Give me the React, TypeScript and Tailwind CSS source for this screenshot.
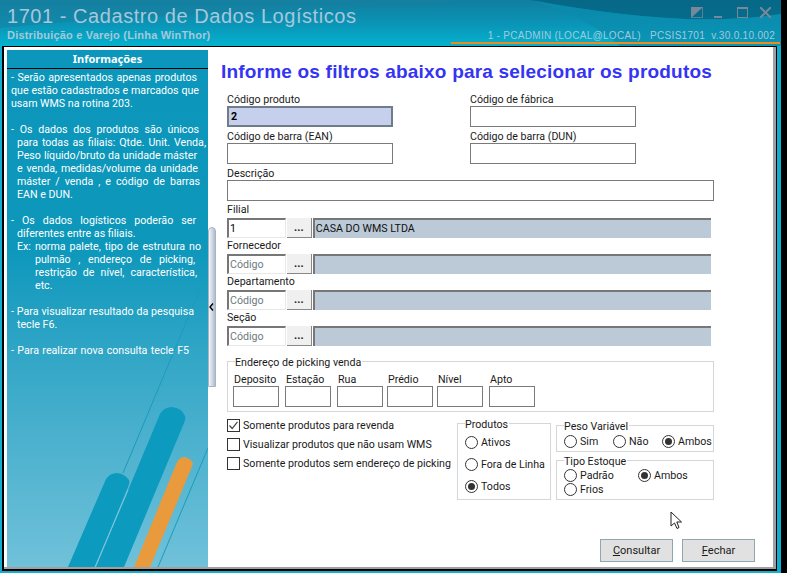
import type { ReactNode } from "react";

const FONT = "font-['Roboto',sans-serif] text-[10.65px] leading-[13px] text-[#1a1a1a]";

// text, left edge and right edge inside the side panel (null = not stretched)
const INFO_LINES: [string, number, number | null][] = [
  ["- Serão apresentados apenas produtos", 4, 190],
  ["que estão cadastrados e marcados que", 4, 192],
  ["usam WMS na rotina 203.", 4, null],
  ["", 4, null],
  ["- Os dados dos produtos são únicos", 4, 192],
  ["para todas as filiais: Qtde. Unit. Venda,", 10, 199],
  ["Peso líquido/bruto da unidade máster", 10, 190],
  ["e venda, medidas/volume da unidade", 10, 191],
  ["máster / venda , e código de barras", 10, 193],
  ["EAN e DUN.", 10, null],
  ["", 4, null],
  ["- Os dados logísticos poderão ser", 4, 189],
  ["diferentes entre as filiais.", 10, null],
  ["Ex: norma palete, tipo de estrutura no", 10, 194],
  ["pulmão , endereço de picking,", 28, 188],
  ["restrição de nível, característica,", 28, 190],
  ["etc.", 28, null],
  ["", 4, null],
  ["- Para visualizar resultado da pesquisa", 4, 187],
  ["tecle F6.", 10, null],
  ["", 4, null],
  ["- Para realizar nova consulta tecle F5", 4, 182],
];

function Field({ label, className }: { label: string; className: string }) {
  return (
    <div className={className}>
      <div className="h-[13px] pt-[1px] whitespace-nowrap">{label}</div>
      <div className="mt-[1px] h-[21px] border border-[#7a7a7a] bg-white" />
    </div>
  );
}

function LookupRow({ label, code, name }: { label: string; code?: string; name?: string }) {
  return (
    <div className="h-[36px]">
      <div className="h-[15px] pt-[1px] whitespace-nowrap">{label}</div>
      <div className="mt-[1px] flex h-[20px] w-[484px]">
        <div
          className={
            "flex w-[59px] items-center border-t-2 border-r border-b border-l-2 border-t-[#777] border-r-[#e8e8e8] border-b-[#e8e8e8] border-l-[#777] pl-[1px] " +
            (code ? "text-black" : "text-[#6d7a80]")
          }
        >
          {code ?? "Código"}
        </div>
        <button className="ml-[1px] flex h-[20px] w-[25px] items-center justify-center border-r border-b border-r-[#888] border-b-[#888] bg-[#f0f0f0] text-[11px] font-bold">
          ...
        </button>
        <div className="ml-[1px] flex h-[20px] w-[399px] items-center border-t-2 border-l-2 border-t-[#777] border-l-[#777] bg-[#bccad8] pb-[1px] pl-[1px] text-[#111]">
          {name}
        </div>
      </div>
    </div>
  );
}

function Group({ title, className, children }: { title: string; className: string; children: ReactNode }) {
  return (
    <div className={"relative border border-[#d6d6d6] " + className}>
      <span className="absolute top-[-6px] left-[7px] bg-white pr-[1px] whitespace-nowrap">{title}</span>
      {children}
    </div>
  );
}

function Radio({ label, checked, className }: { label: string; checked?: boolean; className?: string }) {
  return (
    <div className={"flex items-center gap-[3px] whitespace-nowrap " + (className ?? "")}>
      <span className="flex size-[13px] shrink-0 items-center justify-center rounded-full border border-[#333] bg-white">
        {checked && <span className="size-[7px] rounded-full bg-[#333]" />}
      </span>
      {label}
    </div>
  );
}

function Check({ label, checked }: { label: string; checked?: boolean }) {
  return (
    <div className="flex h-[13px] items-center gap-[3px] whitespace-nowrap">
      <span className="flex size-[13px] shrink-0 items-center justify-center border border-[#333] bg-white">
        {checked && (
          <svg width="11" height="11" viewBox="0 0 11 11" fill="none" stroke="#444" strokeWidth="1.2">
            <path d="M1.5 5.5 L4.2 8.5 L9.5 1.8" />
          </svg>
        )}
      </span>
      {label}
    </div>
  );
}

function PickingField({ label, className }: { label: string; className: string }) {
  return (
    <div className={className}>
      <div className="h-[14px] pt-[1px] pl-[1px] whitespace-nowrap">{label}</div>
      <div className="h-[21px] w-[46px] border border-[#7a7a7a] bg-white" />
    </div>
  );
}

function ActionButton({ first, rest }: { first: string; rest: string }) {
  return (
    <button className="h-[23px] w-[73px] border border-[#8fa6b3] bg-[#e1e1e1] text-center text-[11px]">
      <span className="underline">{first}</span>
      {rest}
    </button>
  );
}

function SideArt() {
  return (
    <svg className="absolute inset-0" width="201" height="517" viewBox="0 0 201 517" fill="none">
      <path d="M201 220 L116 423" stroke="#1a9bbd" strokeWidth="1" />
      <path d="M61 517 L99 429 Q103 423 110 423 Q118 424 122 430 Q123 433 121 437 L88 517 Z" fill="#0c9abf" />
      <path d="M89 517 L153 364 Q157 357 165 357 Q175 358 178 366 Q179 369 177 373 L117 517 Z" fill="#0c9abf" />
      <path d="M127 517 L170 412 Q173 407 178 407 Q185 409 186 414 L143 517 Z" fill="#e99a3c" />
      <path d="M151 517 L201 398" stroke="#1a9bbd" strokeWidth="1" />
      <path d="M88 517 L121 440" stroke="#7cc4d8" strokeWidth="1" />
    </svg>
  );
}

function TitleBar() {
  return (
    <div className="relative h-[46px] overflow-hidden bg-[linear-gradient(180deg,#107e9f,#0a96b8_55%,#04b2ce)]">
      <svg className="absolute inset-0" width="781" height="46" viewBox="0 0 781 46" fill="none">
        <path d="M0 0 H781 V14 C700 26 620 16 530 0 Z" fill="#04607f" opacity="0.75" />
        <path d="M0 0 H470 C360 12 180 10 0 28 Z" fill="#1a7fa0" opacity="0.55" />
        <path d="M530 0 C620 16 700 26 781 14 V46 H620 C600 28 570 12 530 0 Z" fill="#0a8cae" opacity="0.7" />
      </svg>
      <div className="relative flex h-full justify-between">
        <div className="pt-[4px] pl-[7px]">
          <div className="font-['Liberation_Sans',sans-serif] text-[20px] leading-[24px] tracking-[0.55px] whitespace-nowrap text-[#a6c8da]">
            1701 - Cadastro de Dados Logísticos
          </div>
          <div className="mt-[1px] font-['Liberation_Sans',sans-serif] text-[11px] leading-[13px] font-bold tracking-[0.2px] whitespace-nowrap text-[#a6c8da]">
            Distribuição e Varejo (Linha WinThor)
          </div>
        </div>
        <div className="flex w-[330px] flex-col items-end">
          <div className="mt-[7px] flex h-[11px] items-start pr-[10px]">
            <svg width="12" height="11" viewBox="0 0 12 11" className="mr-[11px]">
              <path d="M0 0 H12 L0 11 Z" fill="#75899a" />
              <path d="M12 0 V11 H0" fill="none" stroke="#75899a" strokeWidth="1.5" />
            </svg>
            <div className="mt-[9px] mr-[15px] h-[2px] w-[8px] bg-[#75899a]" />
            <div className="mr-[12px] h-[11px] w-[11px] border border-t-2 border-[#75899a]" />
            <svg width="11" height="11" viewBox="0 0 11 11" stroke="#75899a" strokeWidth="2">
              <path d="M0 0 L11 11 M11 0 L0 11" />
            </svg>
          </div>
          <div className="mt-[12px] h-[12px] pr-[6px] font-['Liberation_Sans',sans-serif] text-[10px] leading-[12px] tracking-[0.3px] whitespace-pre text-[#a6c8da]">
            {"1 - PCADMIN (LOCAL@LOCAL)   PCSIS1701  v.30.0.10.002"}
          </div>
          <div className="mr-[1px] h-[2px] w-[329px] bg-[#f08a1c]" />
        </div>
      </div>
    </div>
  );
}

export default function App() {
  return (
    <div className={"relative flex h-[573px] w-[787px] overflow-hidden bg-black " + FONT}>
      <div className="h-[573px] w-[781px] shrink-0 bg-[#12aecf]">
        <TitleBar />
        <div className="ml-[2px] h-[525px] w-[775px] border-t border-r border-b-2 border-l-2 border-black bg-white">
          <div className="flex h-[522px] border-r-[3px] border-b-2 border-[#a0a0a0]">
            <aside className="relative mt-[3px] ml-[3px] h-[517px] w-[201px] shrink-0 overflow-hidden bg-[linear-gradient(180deg,#0c96bb_0%,#0c97bb_38%,#37a8c8_62%,#70c1d9_100%)] text-white">
              <SideArt />
              <div className="relative h-[19px] border-b border-black bg-[#0c96bb] text-center font-['Noto_Sans',sans-serif] text-[11px] leading-[17px] font-bold">
                Informações
              </div>
              <div className="relative pt-[2px]">
                {INFO_LINES.map(([text, left, right], i) =>
                  right === null ? (
                    <div key={i} className="h-[13px] whitespace-nowrap" style={{ marginLeft: left }}>
                      {text}
                    </div>
                  ) : (
                    <div
                      key={i}
                      className="h-[13px] text-justify [text-align-last:justify]"
                      style={{ marginLeft: left, width: right - left }}
                    >
                      {text}
                    </div>
                  ),
                )}
              </div>
            </aside>

            <div className="flex w-[8px] shrink-0 items-center">
              <div className="relative flex h-[160px] w-[8px] items-center rounded-t-sm border border-[#aab4c0] bg-[linear-gradient(90deg,#f2f5f9,#aebccd)]">
                <svg width="5" height="8" viewBox="0 0 5 8" fill="none" stroke="black" strokeWidth="1.4">
                  <path d="M4 0.5 L1 4 L4 7.5" />
                </svg>
              </div>
            </div>

            <main className="ml-[11px] flex-1 pt-[16px]">
              <h1 className="ml-[-6px] font-['Liberation_Sans',sans-serif] text-[19px] leading-[18px] font-bold tracking-[0.2px] whitespace-nowrap text-[#3434f4]">
                Informe os filtros abaixo para selecionar os produtos
              </h1>

              <div className="mt-[11px] flex h-[37px]">
                <div className="w-[243px]">
                  <div className="h-[13px] pt-[1px]">Código produto</div>
                  <div className="mt-[1px] flex h-[21px] w-[166px] items-center border-2 border-[#6e7c8c] bg-[#c6d0ec] pl-[2px] font-bold text-black">
                    2
                  </div>
                </div>
                <Field label="Código de fábrica" className="w-[166px]" />
              </div>
              <div className="flex h-[37px]">
                <Field label="Código de barra (EAN)" className="mr-[77px] w-[166px]" />
                <Field label="Código de barra (DUN)" className="w-[166px]" />
              </div>
              <Field label="Descrição" className="h-[36px] w-[487px]" />

              <LookupRow label="Filial" code="1" name="CASA DO WMS LTDA" />
              <LookupRow label="Fornecedor" />
              <LookupRow label="Departamento" />
              <LookupRow label="Seção" />

              <Group title="Endereço de picking venda" className="mt-[15px] h-[51px] w-[487px]">
                <div className="flex pt-[10px] pl-[5px]">
                  <PickingField label="Deposito" className="mr-[6px]" />
                  <PickingField label="Estação" className="mr-[6px]" />
                  <PickingField label="Rua" className="mr-[4px]" />
                  <PickingField label="Prédio" className="mr-[4px]" />
                  <PickingField label="Nível" className="mr-[6px]" />
                  <PickingField label="Apto" />
                </div>
              </Group>

              <div className="mt-[5px] flex items-start">
                <div className="flex w-[230px] flex-col gap-[6px] pt-[2px]">
                  <Check label="Somente produtos para revenda" checked />
                  <Check label="Visualizar produtos que não usam WMS" />
                  <Check label="Somente produtos sem endereço de picking" />
                </div>
                <Group title="Produtos" className="mt-[6px] h-[77px] w-[94px]">
                  <div className="flex flex-col gap-[9px] pt-[12px] pl-[7px]">
                    <Radio label="Ativos" />
                    <Radio label="Fora de Linha" />
                    <Radio label="Todos" checked />
                  </div>
                </Group>
                <div className="ml-[5px] w-[158px] pt-[8px]">
                  <Group title="Peso Variável" className="h-[27px]">
                    <div className="grid grid-cols-[49px_49px_1fr] pt-[9px] pl-[7px]">
                      <Radio label="Sim" />
                      <Radio label="Não" />
                      <Radio label="Ambos" checked />
                    </div>
                  </Group>
                  <Group title="Tipo Estoque" className="mt-[8px] h-[40px]">
                    <div className="grid grid-cols-[74px_1fr] pt-[8px] pl-[7px]">
                      <Radio label="Padrão" />
                      <Radio label="Ambos" checked />
                      <Radio label="Frios" className="mt-[1px]" />
                    </div>
                  </Group>
                </div>
              </div>

              <div className="mt-[39px] ml-[373px] flex gap-[9px]">
                <ActionButton first="C" rest="onsultar" />
                <ActionButton first="F" rest="echar" />
              </div>
            </main>
          </div>
        </div>
      </div>
      <svg className="absolute top-[511px] left-[670px]" width="13" height="19" viewBox="0 0 13 19" fill="white" stroke="#222" strokeWidth="1">
        <path d="M1 1 L1 15 L4.5 12 L7 17.5 L9 16.5 L6.8 11 L11.5 11 Z" />
      </svg>
    </div>
  );
}
